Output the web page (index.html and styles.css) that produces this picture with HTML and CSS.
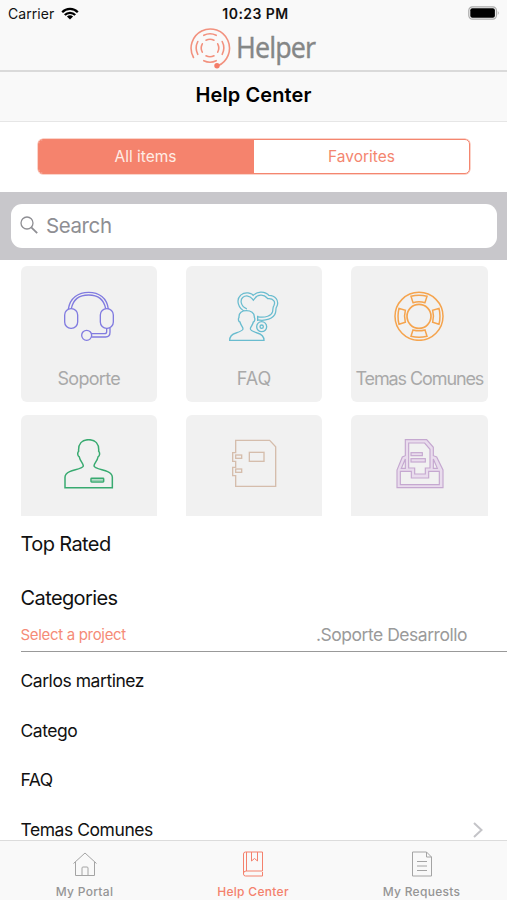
FILE: index.html
```html
<!DOCTYPE html>
<html lang="en">
<head>
<meta charset="utf-8">
<title>Help Center</title>
<link rel="stylesheet" href="styles.css">
</head>
<body>
<div class="app">
  <header class="top">
    <div class="status">
      <div class="carrier"><span>Carrier</span>
        <svg class="wifi" viewBox="0 0 18 13"><path d="M1.2 5.2a11 11 0 0 1 15.6 0M3.8 8a7.3 7.3 0 0 1 10.4 0" fill="none" stroke="#000" stroke-width="2.3"/><path d="M9 12.6 5.9 9.6a4.5 4.5 0 0 1 6.2 0z"/></svg>
      </div>
      <span class="time">10:23 PM</span>
      <svg class="battery" viewBox="0 0 32 14"><rect x=".8" y=".8" width="27.6" height="12.4" rx="3.6" fill="none" stroke="#aaa" stroke-width="1.2"/><rect x="2.3" y="2.3" width="24.6" height="9.4" rx="2"/><path d="M29.8 4.8q1.8 2.2 0 4.4z" fill="#999"/></svg>
    </div>
    <div class="brand">
      <svg class="logo" viewBox="0 0 42 42" fill="none" stroke="#f2917e" stroke-width="1.6" stroke-linecap="round">
        <path d="M4.500 30.500A19.2 19.2 0 1 1 28.5 39"/>
        <path d="M8.800 27.300A14 14 0 0 1 8.800 14.500M33.2 14.500a14 14 0 0 1 0 12.800M14.800 8.300a14 14 0 0 1 12.400 0M14.800 33.7a14 14 0 0 0 12.400 0"/>
        <path d="M13.3 25.200a9 9 0 0 1 0-8.400M28.7 16.800a9 9 0 0 1 0 8.400M17 13.200a9 9 0 0 1 8 0M17 28.800a9 9 0 0 0 8 0"/>
        <circle cx="28" cy="38.7" r="2.7" fill="#f47c68" stroke="none"/>
      </svg>
      <span class="brand-name">Helper</span>
    </div>
  </header>
  <h1 class="title"><span>Help Center</span></h1>
  <div class="segment-wrap">
    <div class="segment"><div class="seg on"><span>All items</span></div><div class="seg"><span>Favorites</span></div></div>
  </div>
  <div class="search-bar">
    <div class="search">
      <svg viewBox="0 0 18 18" fill="none" stroke="#8e8e93"><circle cx="7" cy="7" r="6" stroke-width="1.3"/><path d="m11.3 11.3 5.9 5.9" stroke-width="1.8"/></svg>
      <span>Search</span>
    </div>
  </div>
  <section class="cards">
    <div class="card">
      <svg viewBox="0 0 150 150" fill="none" stroke="#817be0" stroke-width="4">
        <path d="M13 54C18 20 43 4 74 4s55 16 59 50M22 53C27 27 46 12 74 12s46 15 51 41"/>
        <rect x="2" y="53" width="39" height="59" rx="19"/><rect x="109" y="53" width="39" height="59" rx="19"/>
        <path d="M128 111v11q0 6-7 6H82M138 111v13q0 14-13 14H82"/><circle cx="68" cy="133" r="15"/>
      </svg>
      <span class="soporte-label">Soporte</span>
    </div>
    <div class="card">
      <svg viewBox="0 0 150 150" fill="none" stroke="#69bccf" stroke-width="4">
        <path class="cloud-edge" d="M52 58C30 50 27 26 38 16 49 7 65 9 73 20 84 5 106 4 118 18c18-1 28 13 21 27-4 5-2 12-4 19-4 15-26 22-49 18"/>
        <path class="cloud-core" d="M52 58C30 50 27 26 38 16 49 7 65 9 73 20 84 5 106 4 118 18c18-1 28 13 21 27-4 5-2 12-4 19-4 15-26 22-49 18"/>
        <path d="M86 90V74"/>
        <path class="shape" d="M2 148c0-13 6-18 19-22 12-4 22-8 21-13-1-6-7-10-9-20-5-1-6-10-3-14-1-14 9-20 22-20s25 6 24 20c3 4 1 13-3 14-2 10-8 14-9 20-1 5 9 9 21 13 14 4 20 9 20 22z"/>
        <circle class="shape" cx="98" cy="107" r="15"/><circle cx="98" cy="107" r="5"/>
      </svg>
      <span class="faq-label">FAQ</span>
    </div>
    <div class="card">
      <svg viewBox="0 0 150 150" fill="none" stroke="#f5a44e" stroke-width="4.500">
        <circle cx="75" cy="76" r="72"/><circle cx="75" cy="76" r="36" stroke-width="5"/>
        <path d="M51 16q24-6 48 0l-6 19q-18-5-36 0zM51 136q24 6 48 0l-6-19q-18 5-36 0zM15 52q-6 24 0 48l19-6q-5-18 0-36zM135 52q6 24 0 48l-19-6q5-18 0-36z"/>
      </svg>
      <span class="temas-label">Temas Comunes</span>
    </div>
    <div class="card">
      <svg viewBox="0 0 150 150" fill="none" stroke="#38aa70" stroke-width="4.500">
        <path d="M3 146v-31c0-9 5-13 14-17 15-6 41-10 41-17 0-9-10-14-12-27-6-3-6-13-2-17C42 14 54 2 74 2s32 12 30 35c4 4 4 14-2 17-2 13-12 18-12 27 0 7 26 11 41 17 9 4 14 8 14 17v31z"/>
        <rect x="81" y="118" width="38" height="11" rx="2"/><path d="M83 123.500h34" opacity=".5"/>
      </svg>
    </div>
    <div class="card">
      <svg viewBox="0 0 150 150" fill="none" stroke="#d5bdac" stroke-width="4">
        <path d="M20 4h102l18 19v119H20v-32H11V85h9V67H11V41h9z"/><rect x="61" y="40" width="44" height="27"/><rect x="20" y="48" width="18" height="10"/><rect x="20" y="90" width="18" height="10"/>
      </svg>
    </div>
    <div class="card">
      <svg viewBox="0 0 150 150" fill="#e9dced" stroke="#c5a8d0" stroke-width="3.500">
        <path fill-rule="evenodd" d="M34 2h64l20 23v25l10 4 19 39v53H9V93l16-39 9-4zM44 12v75h18v18h32V87h14V31L92 12zM19 97v40h117V97h-32v20H52V97zM34 60 22 88h12zM118 60l12 28h-12z"/>
        <rect x="51" y="41" width="34" height="9"/><rect x="51" y="59" width="43" height="10"/>
      </svg>
    </div>
  </section>
  <section class="content">
    <h2 class="top-rated"><span>Top Rated</span></h2>
    <h2 class="categories"><span>Categories</span></h2>
    <div class="project"><span class="select">Select a project</span><span class="value">.Soporte Desarrollo</span></div>
    <ul>
      <li><span>Carlos martinez</span></li>
      <li><span>Catego</span></li>
      <li><span>FAQ</span></li>
      <li><span>Temas Comunes</span><svg viewBox="0 0 10 16"><path d="m1 1 7.500 7L1 15" fill="none" stroke="#c4c4c8" stroke-width="2"/></svg></li>
    </ul>
  </section>
  <nav class="tabs">
    <div class="tab"><svg viewBox="0 0 26 26" fill="none" stroke="#a4a4a4"><path d="M1.500 12.500 13 2l11.500 10.500M3.500 11v13.500h19V11M10 24.500V17q0-1 1-1h4q1 0 1 1v7.500"/></svg><span>My Portal</span></div>
    <div class="tab active"><svg viewBox="0 0 26 26" fill="none" stroke="#f4816d"><path d="M22.500 20V1H5.500Q3.500 1 3.500 3v20q0 2 2 2h17v-4M22.500 20H6q-2.500 0-2.500 2.500M6.500 1v19M11.500 1v9l3-2.500 3 2.500V1"/></svg><span>Help Center</span></div>
    <div class="tab"><svg viewBox="0 0 26 26" fill="none" stroke="#a4a4a4"><path d="M3.500 1h14l5 5v19h-19zM17.500 1v5h5M8 10.500h10M8 15h10M8 19.500h10"/></svg><span>My Requests</span></div>
  </nav>
</div>
</body>
</html>
```
FILE: styles.css
```css
* { box-sizing: border-box; }
body { margin: 0; background: #fff; color: #111; font-family: Inter, "Liberation Sans", sans-serif; }
svg { display: block; flex: none; }
span { white-space: nowrap; }
h1, h2, ul { margin: 0; padding: 0; font-weight: 400; }
.app { width: 507px; height: 900px; overflow: hidden; display: flex; flex-direction: column; }
.top { height: 72px; flex: none; background: #f9f9f9; border-bottom: 2px solid #dadada; }
.status { height: 27px; padding: 0 7px 0 8px; display: grid; grid-template-columns: 1fr auto 1fr; align-items: center; }
.carrier { display: flex; align-items: center; gap: 7px; font-size: 14px; letter-spacing: .05px; }
.wifi { width: 18px; height: 13px; }
.time { font-size: 14px; font-weight: 600; letter-spacing: .45px; margin-left: 3px; }
.battery { width: 32px; height: 14px; justify-self: end; margin-top: -1px; }
.brand { display: flex; justify-content: center; align-items: center; gap: 5px; height: 42px; padding-right: 3px; }
.logo { width: 42px; height: 42px; }
.brand-name { width: 79px; font-family: "Noto Sans", sans-serif; font-size: 29px; line-height: 40px; color: #858787; letter-spacing: -1px; -webkit-text-stroke: .3px #858787; transform: scaleX(.925) translateY(-1px); transform-origin: left center; }
.title { height: 50px; flex: none; background: #f9f9f9; border-bottom: 1px solid #e6e6e6; font-size: 20px; font-weight: 600; text-align: center; line-height: 46px; color: #000; letter-spacing: .1px; }
.segment-wrap { height: 70px; flex: none; padding: 17px 37px 0 38px; }
.segment { height: 35px; display: flex; border: 1px solid #f4866f; box-shadow: 0 0 0 .5px #f7a796; border-radius: 5px; overflow: hidden; }
.seg { flex: 1 1 0; min-width: 0; text-align: center; color: #f4866f; font-size: 15.500px; line-height: 34px; }
.seg.on { background: #f5836d; color: #ffede5; flex-basis: -1px; }
.seg.on span { margin-right: 2px; }
.search-bar { height: 68px; flex: none; background: #c8c7cb; padding: 12px 10px 0 11px; }
.search { height: 44px; background: #fff; border-radius: 11px; display: flex; align-items: center; gap: 8px; padding: 0 0 2px 9px; color: #8e8e93; font-size: 20.500px; letter-spacing: -.4px; }
.search svg { width: 18px; height: 18px; }
.cards { height: 256px; flex: none; overflow: hidden; padding: 6px 19px 0 20.500px; display: grid; grid-template-columns: repeat(3, 136.500px); grid-template-rows: 136px 136px; gap: 12.500px 28.800px; }
.card { background: #f1f1f1; border-radius: 6px; display: flex; flex-direction: column; align-items: center; padding-top: 24.500px; color: #a9a9a9; font-size: 18px; }
.card svg { width: 50px; height: 50px; }
.card span { margin-top: 25px; line-height: 26px; }
.soporte-label { letter-spacing: -.7px; }
.temas-label { letter-spacing: -1.1px; }
.cloud-edge { stroke-width: 13; }
.cloud-core { stroke: #f1f1f1; stroke-width: 5.500; }
.shape { fill: #f1f1f1; }
.content { padding-left: 20.500px; flex: 1; min-height: 0; overflow: hidden; }
h2 { font-size: 20px; height: 54px; line-height: 56px; letter-spacing: -.6px; }
.project { height: 28px; padding: 0 40px 6px 0; display: flex; justify-content: space-between; align-items: center; border-bottom: 1px solid #999; }
.select { color: #f58b77; font-size: 15px; letter-spacing: -.32px; }
.value { color: #9a9a9a; font-size: 17.500px; letter-spacing: -.47px; }
ul { list-style: none; padding-top: 4px; }
li { height: 49.600px; display: flex; align-items: center; justify-content: space-between; padding-right: 24px; font-size: 17.500px; letter-spacing: -.45px; }
li svg { width: 10px; height: 16px; }
.tabs { height: 60px; flex: none; background: #f9f9f9; border-top: 1px solid #dcdcdc; display: grid; grid-template-columns: 169px 168px 169px; }
.tab { display: flex; flex-direction: column; align-items: center; padding-top: 10px; color: #959595; font-size: 12px; font-weight: 500; letter-spacing: .3px; }
.tab svg { width: 26px; height: 26px; }
.tab span { margin-top: 7px; line-height: 16px; }
.active { color: #f4816d; }
```
